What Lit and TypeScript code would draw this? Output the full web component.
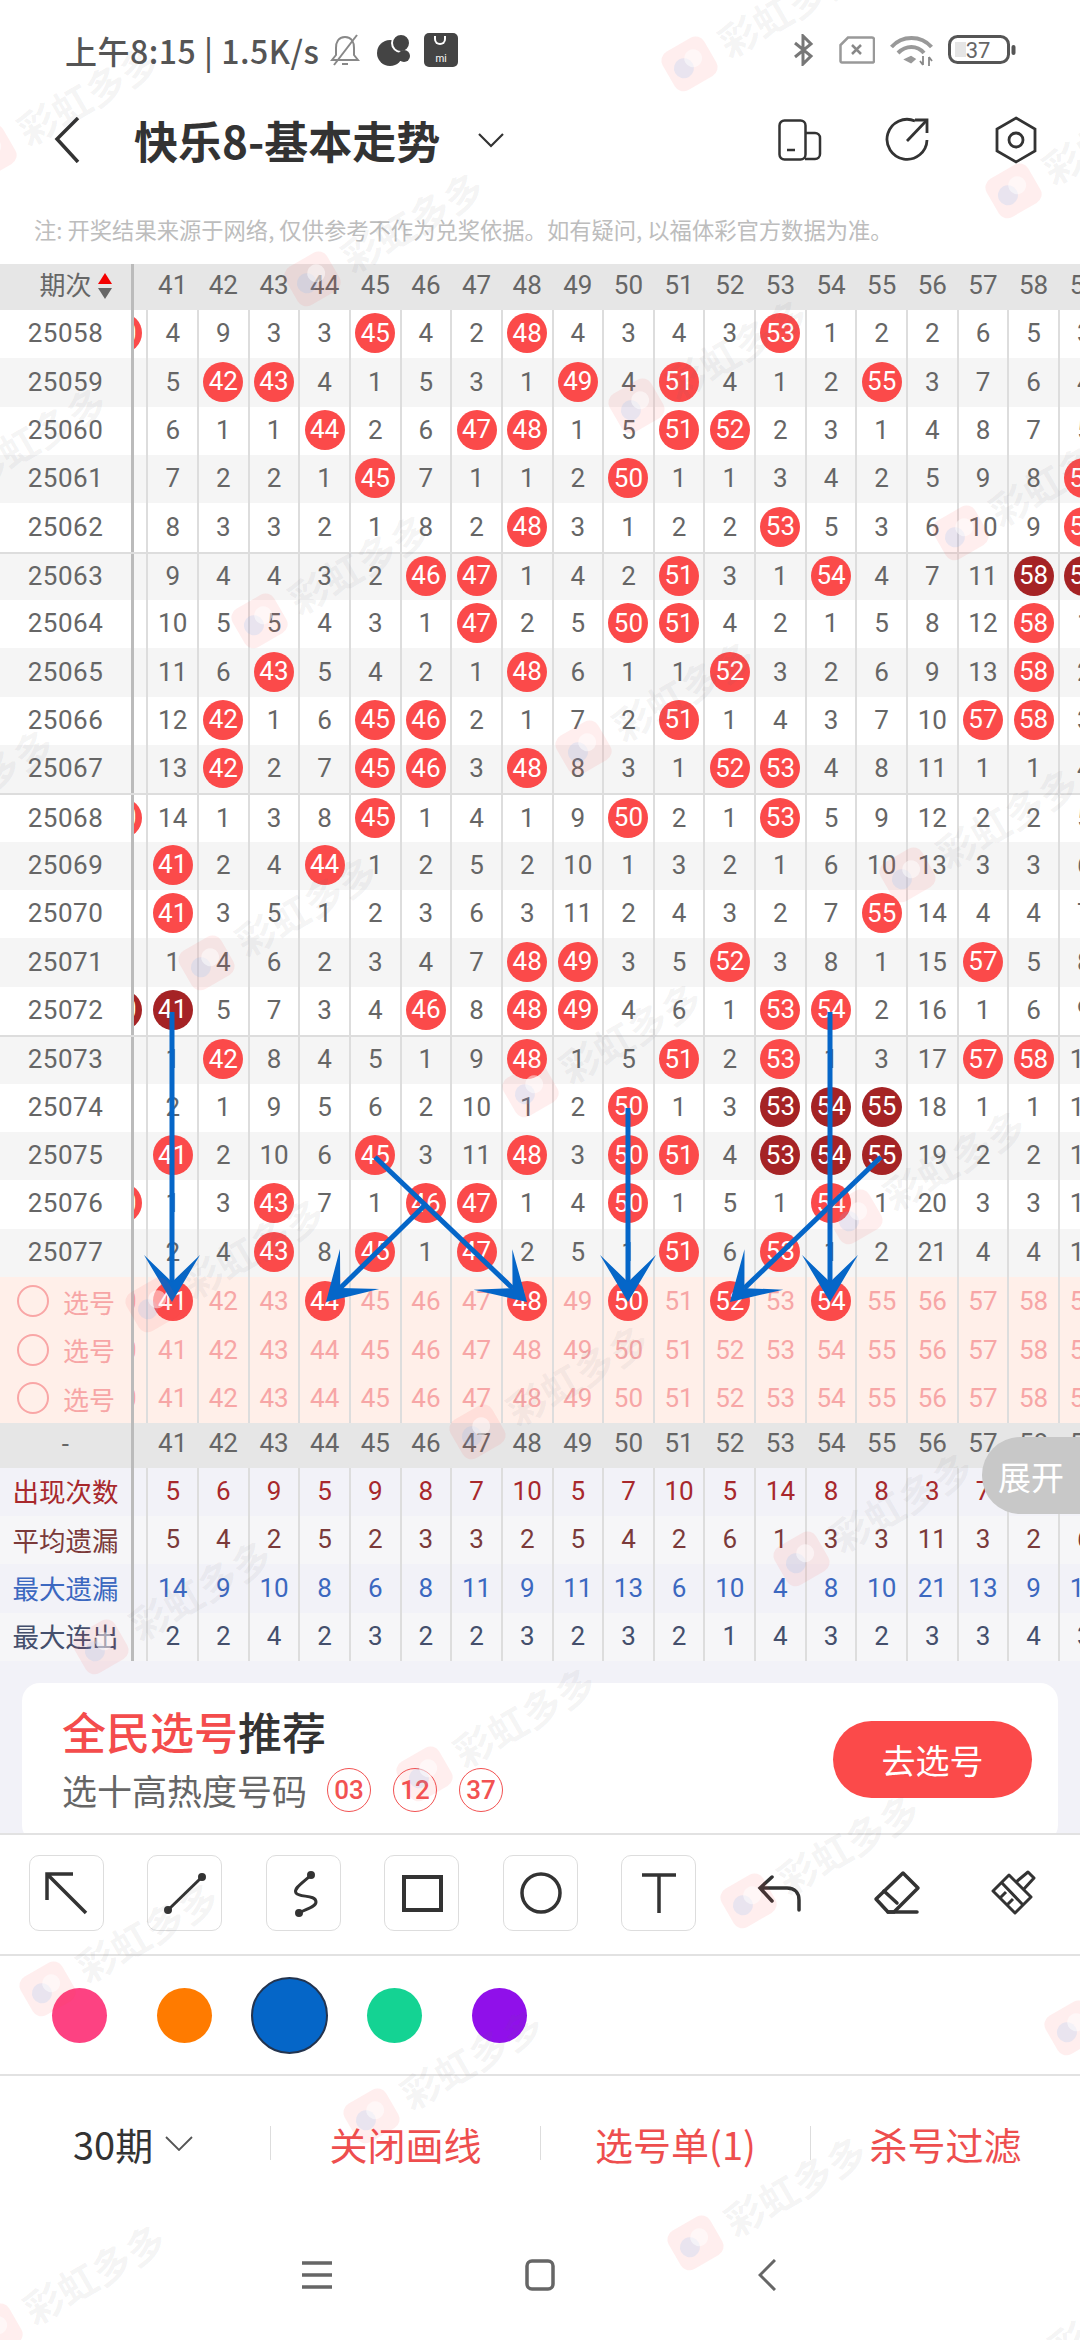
import { html, css, svg, LitElement } from 'lit';
import { customElement } from 'lit/decorators.js';

// one line per draw: marker for column 40, then columns 41..59
// * = red ball, # = dark ball, - = nothing visible
const DRAWS: [string, string][] = [
    ['25058', '* 4 9 3 3 * 4 2 * 4 3 4 3 * 1 2 2 6 5 3'],
    ['25059', '- 5 * * 4 1 5 3 1 * 4 * 4 1 2 * 3 7 6 4'],
    ['25060', '- 6 1 1 * 2 6 * * 1 5 * * 2 3 1 4 8 7 5'],
    ['25061', '- 7 2 2 1 * 7 1 1 2 * 1 1 3 4 2 5 9 8 *'],
    ['25062', '- 8 3 3 2 1 8 2 * 3 1 2 2 * 5 3 6 10 9 *'],
    ['25063', '- 9 4 4 3 2 * * 1 4 2 * 3 1 * 4 7 11 # #'],
    ['25064', '- 10 5 5 4 3 1 * 2 5 * * 4 2 1 5 8 12 * 1'],
    ['25065', '- 11 6 * 5 4 2 1 * 6 1 1 * 3 2 6 9 13 * 2'],
    ['25066', '- 12 * 1 6 * * 2 1 7 2 * 1 4 3 7 10 * * 3'],
    ['25067', '- 13 * 2 7 * * 3 * 8 3 1 * * 4 8 11 1 1 4'],
    ['25068', '* 14 1 3 8 * 1 4 1 9 * 2 1 * 5 9 12 2 2 5'],
    ['25069', '- * 2 4 * 1 2 5 2 10 1 3 2 1 6 10 13 3 3 6'],
    ['25070', '- * 3 5 1 2 3 6 3 11 2 4 3 2 7 * 14 4 4 7'],
    ['25071', '- 1 4 6 2 3 4 7 * * 3 5 * 3 8 1 15 * 5 8'],
    ['25072', '# # 5 7 3 4 * 8 * * 4 6 1 * * 2 16 1 6 9'],
    ['25073', '- 1 * 8 4 5 1 9 * 1 5 * 2 * 1 3 17 * * 10'],
    ['25074', '- 2 1 9 5 6 2 10 1 2 * 1 3 # # # 18 1 1 11'],
    ['25075', '- * 2 10 6 * 3 11 * 3 * * 4 # # # 19 2 2 12'],
    ['25076', '* 1 3 * 7 1 * * 1 4 * 1 5 1 * 1 20 3 3 13'],
    ['25077', '- 2 4 * 8 * 1 * 2 5 1 * 6 * 1 2 21 4 4 14'],
];

const STATS = [
    { label: '出现次数', tone: 'count', vals: '- 5 6 9 5 9 8 7 10 5 7 10 5 14 8 8 3 7 4 4' },
    { label: '平均遗漏', tone: 'avg', vals: '- 5 4 2 5 2 3 3 2 5 4 2 6 1 3 3 11 3 2 6' },
    { label: '最大遗漏', tone: 'max', vals: '- 14 9 10 8 6 8 11 9 11 13 6 10 4 8 10 21 13 9 14' },
    { label: '最大连出', tone: 'run', vals: '- 2 2 4 2 3 2 2 3 2 3 2 1 4 3 2 3 3 4 3' },
];

const COLUMNS = Array.from({ length: 20 }, (_, i) => 40 + i);
const PICKED = [41, 44, 48, 50, 52, 54];

const ARROWS = [
    [172, 1012, 172, 1302],
    [628, 1108, 628, 1302],
    [830, 1012, 830, 1302],
    [375, 1157, 527, 1302],
    [425, 1205, 326, 1302],
    [881, 1157, 730, 1302],
];

// watermark repeats on a skewed lattice
function marks() {
    const out: [number, number][] = [];
    for (let i = -10; i < 12; i++) {
        for (let j = -10; j < 12; j++) {
            const x = 689 + i * 324 + j * 377;
            const y = 63 + i * 127 - j * 215;
            if (x > -220 && x < 1120 && y > -60 && y < 2480) out.push([x, y]);
        }
    }
    return out;
}

function arrow([x1, y1, x2, y2]: number[]) {
    const len = Math.hypot(x2 - x1, y2 - y1);
    const ux = (x2 - x1) / len;
    const uy = (y2 - y1) / len;
    const bx = x2 - ux * 47;
    const by = y2 - uy * 47;
    const nx = x2 - ux * 20;
    const ny = y2 - uy * 20;
    const pts = [
        [x2, y2],
        [bx - uy * 28, by + ux * 28],
        [nx, ny],
        [bx + uy * 28, by - ux * 28],
    ].map((p) => p.join(',')).join(' ');
    return svg`<line x1=${x1} y1=${y1} x2=${nx} y2=${ny} stroke="#0566c8" stroke-width="5"></line>
        <polygon points=${pts} fill="#0566c8"></polygon>`;
}

@customElement('app-root')
export class AppRoot extends LitElement {
    static styles = css`
        :host {
            display: block;
            position: relative;
            width: 1080px;
            height: 2340px;
            overflow: hidden;
            background: #fff;
            font-family: 'Noto Sans CJK SC', Roboto, sans-serif;
            color: #333;
        }
        svg {
            display: block;
            flex: none;
        }
        .status {
            display: flex;
            align-items: center;
            height: 100px;
            padding: 0 63px 0 65px;
        }
        .clock {
            font-size: 32px;
            font-weight: 500;
            letter-spacing: 0.5px;
            color: #555;
            width: 265px;
            white-space: nowrap;
        }
        .status-left {
            display: flex;
            align-items: center;
            gap: 14px;
        }
        .mi {
            width: 34px;
            height: 34px;
            border-radius: 5px;
            background: #444;
            position: relative;
            color: #fff;
            font: 10px Roboto, sans-serif;
            text-align: center;
            line-height: 52px;
        }
        .mi::before {
            content: '';
            position: absolute;
            left: 10px;
            top: 3px;
            width: 12px;
            height: 9px;
            border: 2px solid #fff;
            border-top: none;
            border-radius: 0 0 8px 8px;
            box-sizing: border-box;
        }
        .status-right {
            display: flex;
            align-items: center;
            margin-left: auto;
        }
        .nav {
            display: flex;
            align-items: center;
            height: 80px;
            padding: 0 42px 0 54px;
        }
        .title {
            margin-left: 54px;
            font-size: 44px;
            font-weight: 700;
            color: #333;
            white-space: nowrap;
        }
        .nav-actions {
            display: flex;
            align-items: center;
            margin-left: auto;
            gap: 63px;
        }
        .note {
            box-sizing: border-box;
            height: 84px;
            padding: 35px 0 0 34px;
            font-size: 22.3px;
            line-height: 28px;
            color: #bdbdbd;
            white-space: nowrap;
        }

        .row {
            display: flex;
            height: 48.35px;
            box-sizing: border-box;
            font: 26px Roboto, sans-serif;
            color: #666;
        }
        .row.even {
            background: #f5f5f5;
        }
        .row.odd {
            background: #fff;
        }
        .row.group {
            border-top: 2px solid #ddd;
        }
        .row.head {
            height: 46px;
            background: #e6e6e6;
        }
        .row.head.low {
            height: 45px;
        }
        .row.head .cell {
            border-right-color: transparent;
            padding-bottom: 4px;
        }
        .row.pick {
            height: 48.6px;
            background: #ffefe9;
            color: #f7a6a6;
        }
        .row.pick .cell,
        .row.pick .lead {
            padding-bottom: 0;
        }
        .row.stat-count,
        .row.stat-max {
            background: #f2f2f8;
        }
        .row.stat-avg,
        .row.stat-run {
            background: #f6f6f8;
        }
        .stat-count {
            color: #a8282c;
        }
        .stat-avg {
            color: #7b3a3a;
        }
        .stat-max {
            color: #3c68c0;
        }
        .stat-run {
            color: #444f6c;
        }
        .lead {
            box-sizing: border-box;
            width: 134px;
            flex: none;
            display: flex;
            align-items: center;
            justify-content: center;
            border-right: 3px solid #bbb;
            padding-bottom: 2px;
            letter-spacing: 0.5px;
        }
        .lead-text {
            font-family: 'Noto Sans CJK SC', sans-serif;
            font-size: 26px;
            letter-spacing: 0;
        }
        .stat-label {
            font-size: 26.5px;
        }
        .sort-head {
            display: flex;
            align-items: center;
            margin-left: 20px;
        }
        .sort-head .lead-text {
            margin-bottom: 5px;
        }
        .sort {
            display: flex;
            flex-direction: column;
            gap: 4px;
            margin-left: 6px;
        }
        .tri {
            width: 0;
            height: 0;
            border-left: 7px solid transparent;
            border-right: 7px solid transparent;
        }
        .tri.up {
            border-bottom: 11px solid #f40000;
        }
        .tri.down {
            border-top: 11px solid #666;
        }
        .pick-lead {
            justify-content: flex-start;
            padding-left: 17px;
            gap: 14px;
        }
        .ring {
            width: 32px;
            height: 32px;
            box-sizing: border-box;
            border: 2px solid #f9a6a6;
            border-radius: 50%;
        }
        .cells {
            flex: 1;
            min-width: 0;
            overflow: hidden;
            display: flex;
        }
        .strip {
            display: flex;
            flex: none;
            margin-left: -36.25px;
        }
        .cell {
            box-sizing: border-box;
            width: 50.65px;
            flex: none;
            display: flex;
            align-items: center;
            justify-content: center;
            border-right: 2px solid #ddd;
            padding-bottom: 2px;
        }
        .ball {
            box-sizing: border-box;
            width: 40px;
            height: 40px;
            flex: none;
            border-radius: 50%;
            background: #fb4a4a;
            color: #fff;
            display: flex;
            align-items: center;
            justify-content: center;
            padding-bottom: 1px;
        }
        .ball.dark {
            background: #a52325;
        }

        .tail {
            position: relative;
            background: #f2f2f8;
            padding: 22px 22px 0;
            height: 172px;
            box-sizing: border-box;
        }
        .promo {
            box-sizing: border-box;
            height: 160px;
            border-radius: 18px;
            background: #fff;
            padding: 18px 26px 0 40px;
            display: flex;
            align-items: flex-start;
        }
        .promo-title {
            font-size: 44px;
            line-height: 60px;
            font-weight: 500;
            color: #333;
        }
        .promo-title b {
            font-weight: 500;
            color: #f44c4c;
        }
        .promo-sub {
            display: flex;
            align-items: center;
            font-size: 35px;
            line-height: 46px;
            color: #666;
            margin-top: 6px;
        }
        .hot {
            display: flex;
            gap: 22px;
            margin-left: 20px;
        }
        .hot span {
            box-sizing: border-box;
            width: 44px;
            height: 44px;
            border: 1px solid #f25252;
            border-radius: 50%;
            color: #f25252;
            font: 500 26px Roboto, sans-serif;
            display: flex;
            align-items: center;
            justify-content: center;
        }
        .go {
            margin-left: auto;
            margin-top: 20px;
            width: 199px;
            height: 77px;
            border-radius: 39px;
            background: #fb4a4a;
            color: #fff;
            font-size: 34px;
            display: flex;
            align-items: center;
            justify-content: center;
        }
        .tools {
            position: relative;
            box-sizing: border-box;
            height: 121px;
            background: #fff;
            border-top: 2px solid #e2e2e2;
            padding: 20px 0 0 29px;
            display: flex;
            align-items: flex-start;
        }
        .tool-btns {
            display: flex;
            gap: 43.4px;
        }
        .tool {
            box-sizing: border-box;
            width: 75px;
            height: 76px;
            border: 1px solid #ddd;
            border-radius: 10px;
        }
        .tool svg {
            margin: -1px;
        }
        .tools-plain {
            display: flex;
            margin: 13px 0 0 59px;
            gap: 67px;
        }
        .swatches {
            box-sizing: border-box;
            height: 122px;
            border-top: 2px solid #e2e2e2;
            border-bottom: 2px solid #e2e2e2;
            padding-left: 52px;
            display: flex;
            align-items: center;
            gap: 50px;
            background: #fff;
        }
        .dot {
            width: 55px;
            height: 55px;
            border-radius: 50%;
        }
        .dot.on {
            box-sizing: border-box;
            width: 77px;
            height: 77px;
            margin: 0 -11px;
            border: 2px solid #23344f;
        }
        .bar {
            display: flex;
            align-items: center;
            height: 134px;
            background: #fff;
            font-size: 38px;
        }
        .bar-item {
            box-sizing: border-box;
            flex: 1;
            height: 34px;
            display: flex;
            align-items: center;
            justify-content: center;
            color: #ee4e4e;
            border-left: 1px solid #ddd;
            white-space: nowrap;
        }
        .bar-first {
            box-sizing: border-box;
            width: 270px;
            flex: none;
            padding-left: 73px;
            display: flex;
            align-items: center;
            gap: 12px;
            color: #333;
        }
        .sys {
            display: flex;
            align-items: center;
            height: 130px;
            padding-left: 302px;
            background: #fff;
        }
        .sys-menu {
            margin-right: 193px;
        }
        .sys-home {
            margin-right: 203px;
        }

        .expand {
            position: absolute;
            right: 0;
            top: 1437px;
            width: 98px;
            height: 77px;
            border-radius: 38px 0 0 38px;
            background: #c8c8c8;
            color: #fff;
            font-size: 33px;
            display: flex;
            align-items: center;
            justify-content: center;
        }
        .arrows {
            position: absolute;
            left: 0;
            top: 0;
        }
        .marks {
            position: absolute;
            inset: 0;
            pointer-events: none;
            overflow: hidden;
        }
        .mark {
            position: absolute;
            display: flex;
            align-items: center;
            gap: 8px;
            margin: -29px 0 0 -29px;
            transform: rotate(-30deg);
            transform-origin: 29px 29px;
            font-size: 39px;
            font-weight: 700;
            line-height: 58px;
            color: rgba(100, 100, 110, 0.07);
            white-space: nowrap;
        }
    `;

    renderValue(col: number, v: string) {
        if (v === '-') return html`<div class="cell"></div>`;
        if (v === '*') return html`<div class="cell"><div class="ball">${col}</div></div>`;
        if (v === '#') return html`<div class="cell"><div class="ball dark">${col}</div></div>`;
        return html`<div class="cell">${v}</div>`;
    }

    renderHead(lead: unknown, cls = '') {
        return html`
            <div class="row head ${cls}">
                <div class="lead">${lead}</div>
                <div class="cells">
                    <div class="strip">${COLUMNS.map((c) => html`<div class="cell">${c === 40 ? '' : c}</div>`)}</div>
                </div>
            </div>
        `;
    }

    renderDraw([period, line]: [string, string], i: number) {
        const vals = line.split(' ');
        const cls = `row ${i % 2 ? 'even' : 'odd'} ${i && i % 5 === 0 ? 'group' : ''}`;
        return html`
            <div class=${cls}>
                <div class="lead">${period}</div>
                <div class="cells">
                    <div class="strip">${vals.map((v, k) => this.renderValue(40 + k, v))}</div>
                </div>
            </div>
        `;
    }

    renderPick(first: boolean) {
        return html`
            <div class="row pick">
                <div class="lead pick-lead"><div class="ring"></div><span class="lead-text">选号</span></div>
                <div class="cells">
                    <div class="strip">
                        ${COLUMNS.map((c) =>
                            first && PICKED.includes(c)
                                ? html`<div class="cell"><div class="ball">${c}</div></div>`
                                : html`<div class="cell">${c}</div>`
                        )}
                    </div>
                </div>
            </div>
        `;
    }

    renderStat(s: { label: string; tone: string; vals: string }) {
        return html`
            <div class="row stat-${s.tone}">
                <div class="lead"><span class="lead-text stat-label">${s.label}</span></div>
                <div class="cells">
                    <div class="strip">
                        ${s.vals.split(' ').map((v) => html`<div class="cell">${v === '-' ? '' : v}</div>`)}
                    </div>
                </div>
            </div>
        `;
    }

    renderStatus() {
        return html`
            <div class="status">
                <div class="clock">上午8:15 | 1.5K/s</div>
                <div class="status-left">
                    <svg width="30" height="32" viewBox="0 0 30 32" fill="none" stroke="#888" stroke-width="2">
                        <path d="M15 3C8 3 6 9 6 14v7l-4 5h26l-4-5v-7C24 9 22 3 15 3z"></path>
                        <path d="M12 30h6"></path>
                        <path d="M27 1L4 31"></path>
                    </svg>
                    <svg width="36" height="32" viewBox="0 0 36 32">
                        <circle cx="16" cy="19" r="13" fill="#444"></circle>
                        <circle cx="27" cy="9" r="9" fill="#444" stroke="#fff" stroke-width="2"></circle>
                        <circle cx="30" cy="22" r="6" fill="#444"></circle>
                    </svg>
                    <div class="mi">mi</div>
                </div>
                <div class="status-right">
                    <svg width="21" height="32" viewBox="0 0 21 32" fill="none" stroke="#777" stroke-width="3">
                        <path d="M2 9l16 13-8 8V2l8 8L2 23"></path>
                    </svg>
                    <svg style="margin-left:25px" width="36" height="28" viewBox="0 0 36 28" fill="none" stroke="#999" stroke-width="2.5">
                        <path d="M9 1.500h24a2 2 0 0 1 2 2V25a1.500 1.500 0 0 1-2 1.500H3A1.500 1.500 0 0 1 1.500 25V9z"></path>
                        <path d="M13 9l9 9M22 9l-9 9" stroke="#888"></path>
                    </svg>
                    <svg style="margin-left:15px" width="43" height="34" viewBox="0 0 43 34" fill="none" stroke="#999" stroke-width="4">
                        <path d="M1.500 14C12 2 31 2 41.500 14"></path>
                        <path d="M8 20c8-8 19-8 26 0"></path>
                        <path d="M15 26.500l6-3 4 2.500-4 3.500z" fill="#999" stroke-width="1.500"></path>
                        <path d="M33 23v9M30 28l3 4M39 33v-9M39 24l3 4" stroke="#888" stroke-width="1.800"></path>
                    </svg>
                    <svg style="margin-left:15px" width="69" height="30" viewBox="0 0 69 30" fill="none">
                        <rect x="1.500" y="1.500" width="59" height="26" rx="8" stroke="#555" stroke-width="3"></rect>
                        <rect x="7" y="7" width="11" height="15" fill="#e5e5e5"></rect>
                        <rect x="63.500" y="10" width="4" height="10" rx="2" fill="#555"></rect>
                        <text x="30" y="23" text-anchor="middle" font-family="Roboto, sans-serif" font-size="22" fill="#666">37</text>
                    </svg>
                </div>
            </div>
        `;
    }

    renderNav() {
        return html`
            <div class="nav">
                <svg width="26" height="46" viewBox="0 0 26 46" fill="none" stroke="#333" stroke-width="3.500">
                    <path d="M24 1L3 22l21 23"></path>
                </svg>
                <div class="title">快乐8-基本走势</div>
                <svg style="margin-left:38px" width="26" height="16" viewBox="0 0 26 16" fill="none" stroke="#333" stroke-width="2.200">
                    <path d="M1 2l12 12L25 2"></path>
                </svg>
                <div class="nav-actions">
                    <svg width="44" height="42" viewBox="0 0 44 42" fill="none" stroke="#333" stroke-width="2.500">
                        <rect x="1.500" y="1.500" width="26" height="39" rx="5"></rect>
                        <path d="M27 14h10a5 5 0 0 1 5 5v16a5 5 0 0 1-5 5H27"></path>
                        <path d="M9 31h8"></path>
                    </svg>
                    <svg width="46" height="46" viewBox="0 0 46 46" fill="none" stroke="#333" stroke-width="2.800">
                        <path d="M30 4A20 20 0 1 0 42 23"></path>
                        <path d="M22 24L42 3"></path>
                        <path d="M30 3h12v13"></path>
                    </svg>
                    <svg width="44" height="48" viewBox="0 0 44 48" fill="none" stroke="#333" stroke-width="2.800">
                        <path d="M22 2l19 11v22L22 46 3 35V13z"></path>
                        <circle cx="22" cy="24" r="7"></circle>
                    </svg>
                </div>
            </div>
        `;
    }

    renderTools() {
        return html`
            <div class="tools">
                <div class="tool-btns">
                    <div class="tool">
                        <svg width="75" height="76" fill="none" stroke="#333" stroke-width="3.500">
                            <path d="M44 19H18v26M18 19l39 39"></path>
                        </svg>
                    </div>
                    <div class="tool">
                        <svg width="75" height="76" fill="#333" stroke="#333" stroke-width="3">
                            <path d="M21 55L55 22"></path>
                            <circle cx="21" cy="55" r="2.500"></circle>
                            <circle cx="55" cy="22" r="2.500"></circle>
                        </svg>
                    </div>
                    <div class="tool">
                        <svg width="75" height="76" fill="none" stroke="#333" stroke-width="3">
                            <path d="M45 20C38 27 27 33 30 38c3 5 20 1 20 9 0 5-10 7-17 11"></path>
                            <circle cx="45" cy="20" r="2.500" fill="#333"></circle>
                            <circle cx="33" cy="58" r="2.500" fill="#333"></circle>
                        </svg>
                    </div>
                    <div class="tool">
                        <svg width="75" height="76" fill="none" stroke="#333" stroke-width="4">
                            <rect x="20" y="22" width="37" height="33"></rect>
                        </svg>
                    </div>
                    <div class="tool">
                        <svg width="75" height="76" fill="none" stroke="#333" stroke-width="3.500">
                            <circle cx="38" cy="38" r="19"></circle>
                        </svg>
                    </div>
                    <div class="tool">
                        <svg width="75" height="76" fill="none" stroke="#333" stroke-width="3.500">
                            <path d="M21 20h34M38 20v38"></path>
                        </svg>
                    </div>
                </div>
                <div class="tools-plain">
                    <svg width="50" height="50" viewBox="0 0 50 50" fill="none" stroke="#333" stroke-width="3.500" stroke-linecap="round">
                        <path d="M17 9L5 20l12 13M5 20h27c8 0 12 5 12 12v10"></path>
                    </svg>
                    <svg width="50" height="50" viewBox="0 0 50 50" fill="none" stroke="#333" stroke-width="3.500" stroke-linecap="round" stroke-linejoin="round">
                        <path d="M31 5l15 15-24 24h-6L4 31z"></path>
                        <path d="M12 23l13 12M16 44h29"></path>
                    </svg>
                    <svg width="50" height="50" viewBox="0 0 50 50" fill="none" stroke="#333" stroke-width="3" stroke-linejoin="round">
                        <path d="M20 7L4 23l22 22 16-16z"></path>
                        <path d="M27 14L39 4l6 6-11 12"></path>
                        <path d="M13 15l21 22M11 30l6-6M18 37l6-6"></path>
                    </svg>
                </div>
            </div>
        `;
    }

    renderLogo() {
        return svg`<svg width="58" height="58" viewBox="0 0 58 58">
            <rect x="5" y="8" width="48" height="44" rx="10" fill="rgba(255,70,70,0.09)"></rect>
            <circle cx="22" cy="31" r="10" fill="rgba(110,175,250,0.15)"></circle>
            <circle cx="35" cy="27" r="9" fill="rgba(255,255,255,0.5)"></circle>
        </svg>`;
    }

    render() {
        return html`
            ${this.renderStatus()} ${this.renderNav()}
            <div class="note">注: 开奖结果来源于网络, 仅供参考不作为兑奖依据。如有疑问, 以福体彩官方数据为准。</div>

            ${this.renderHead(html`
                <div class="sort-head">
                    <span class="lead-text">期次</span>
                    <div class="sort"><div class="tri up"></div><div class="tri down"></div></div>
                </div>
            `)}
            ${DRAWS.map((d, i) => this.renderDraw(d, i))}
            ${this.renderPick(true)} ${this.renderPick(false)} ${this.renderPick(false)}
            ${this.renderHead('-', 'low')}
            ${STATS.map((s) => this.renderStat(s))}

            <div class="tail">
                <div class="promo">
                    <div>
                        <div class="promo-title"><b>全民选号</b>推荐</div>
                        <div class="promo-sub">
                            选十高热度号码
                            <div class="hot"><span>03</span><span>12</span><span>37</span></div>
                        </div>
                    </div>
                    <div class="go">去选号</div>
                </div>
            </div>
            ${this.renderTools()}
            <div class="swatches">
                <div class="dot" style="background:#fd4282"></div>
                <div class="dot" style="background:#ff7b00"></div>
                <div class="dot on" style="background:#0566c8"></div>
                <div class="dot" style="background:#14d393"></div>
                <div class="dot" style="background:#9010ea"></div>
            </div>
            <div class="bar">
                <div class="bar-first">
                    30期
                    <svg width="28" height="15" viewBox="0 0 28 15" fill="none" stroke="#555" stroke-width="1.800">
                        <path d="M1 1l13 13L27 1"></path>
                    </svg>
                </div>
                <div class="bar-item">关闭画线</div>
                <div class="bar-item">选号单(1)</div>
                <div class="bar-item">杀号过滤</div>
            </div>
            <div class="sys">
                <svg class="sys-menu" width="30" height="28" viewBox="0 0 30 28" fill="none" stroke="#666" stroke-width="3.500">
                    <path d="M0 2h30M0 14h30M0 26h30"></path>
                </svg>
                <svg class="sys-home" width="30" height="32" viewBox="0 0 30 32" fill="none" stroke="#666" stroke-width="3.500">
                    <rect x="2" y="2" width="26" height="28" rx="5"></rect>
                </svg>
                <svg width="18" height="32" viewBox="0 0 18 32" fill="none" stroke="#666" stroke-width="3">
                    <path d="M17 1L2 16l15 15"></path>
                </svg>
            </div>

            <div class="expand">展开</div>
            <svg class="arrows" width="1080" height="2340">${ARROWS.map(arrow)}</svg>
            <div class="marks">
                ${marks().map(
                    ([x, y]) => html`<div class="mark" style="left:${x}px;top:${y}px">${this.renderLogo()}彩虹多多</div>`
                )}
            </div>
        `;
    }
}
